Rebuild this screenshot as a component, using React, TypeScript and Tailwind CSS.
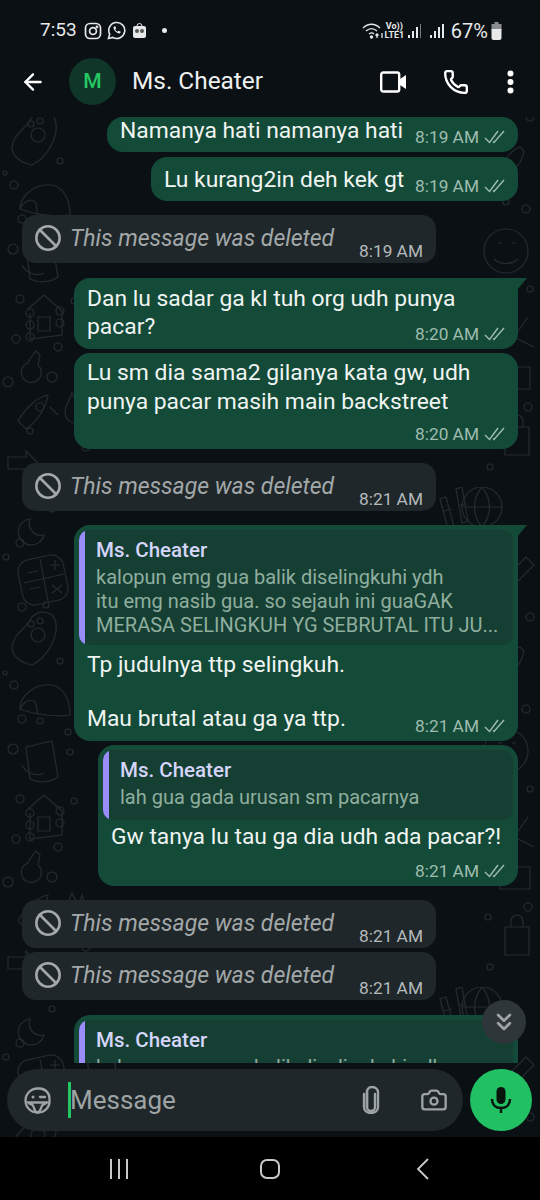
import React from "react";
import { ArrowLeft, Ban, Camera, ChevronsDown, Phone } from "lucide-react";

const DoubleCheck = () => (
    <svg width="22" height="16" viewBox="0 0 22 16" fill="none" stroke="#9fbcae" strokeWidth="1.4" className="shrink-0">
        <path d="M1 9l4.500 4.500L14 2" />
        <path d="M9 12.500l1 1L20 2" />
    </svg>
);

const Time = ({ value, read = true }: { value: string; read?: boolean }) => (
    <span className={`flex items-center gap-[5px] text-[17.3px] leading-none whitespace-nowrap ${read ? "text-[#9fbcae]" : "text-[#b4b9ba]"}`}>
        {value}
        {read && <DoubleCheck />}
    </span>
);

const Deleted = ({ time }: { time: string }) => (
    <div className="ml-[22px] mt-[14px] w-[414px] h-[48px] shrink-0 rounded-[14px] bg-[#1f272a] flex items-start pl-[12px] pr-[13px] pt-[9px]">
        <Ban size={28} strokeWidth={2.200} className="text-[#a3a8a9] shrink-0" />
        <span className="ml-[8px] text-[23px] leading-[30px] italic text-[#a3a8a9]">This message was deleted</span>
        <span className="ml-auto mt-[18.5px]"><Time value={time} read={false} /></span>
    </div>
);

const Sent = ({ left, top, height, children, time, tail = false }: { left: string; top: string; height: string; children: React.ReactNode; time: string; tail?: boolean }) => (
    <div className={`relative self-end mr-[22px] shrink-0 rounded-[16px] bg-[#134b38] ${left} ${top} ${height} ${tail ? "rounded-tr-none" : ""}`}>
        {tail && (
            <svg width="10" height="12" viewBox="0 0 10 12" className="absolute -right-[9px] top-0">
                <path d="M0 0h10L0 12z" fill="#134b38" />
            </svg>
        )}
        {children}
        <span className="absolute right-[12px] bottom-[6px]"><Time value={time} /></span>
    </div>
);

const Quote = ({ lines, height }: { lines: string[]; height: string }) => (
    <div className={`mx-[5px] mt-[5px] rounded-[10px] bg-[#163f33] flex overflow-hidden ${height}`}>
        <div className="w-[6px] bg-[#9b8cfb] shrink-0" />
        <div className="pl-[11px] pt-[6px] min-w-0">
            <div className="text-[20.5px] leading-[29px] font-medium text-[#d5d5fb]">Ms. Cheater</div>
            {lines.map((l) => (
                <div key={l} className="text-[20px] leading-[24px] text-[#8fae9f] whitespace-nowrap">{l}</div>
            ))}
        </div>
    </div>
);

// background doodles, tile repeats down the chat
const Wallpaper = () => (
    <svg className="absolute inset-0 w-full h-full" fill="none" stroke="#232a2e" strokeWidth="1.200">
        <defs>
            <pattern id="doodle" width="540" height="500" patternUnits="userSpaceOnUse" y="370">
                {/* moon */}
                <path d="M30 32a13 13 0 1 0 14 16 12 12 0 0 1-14-16z" />
                {/* calculator */}
                <rect x="20" y="70" width="46" height="46" rx="12" transform="rotate(-12 43 93)" />
                <path d="M24 96l40-9M40 72l8 42M50 78h10M55 73v10M52 98l10 8M62 98l-10 8M28 86l10-2M30 102l10-2" />
                {/* paw */}
                <path d="M12 160c2-14 14-18 20-30 8-8 22-6 24 6 2 14-8 34-24 42-10-2-20-8-20-18z" />
                <circle cx="38" cy="148" r="7" /><circle cx="31" cy="137" r="3" /><circle cx="40" cy="134" r="3" />
                {/* taco */}
                <path d="M20 222c0-14 16-26 32-24 10 2 18 12 18 30-12 2-34 0-50-6z" />
                <path d="M20 222c4-8 10-10 14-8s2 10 4 14" />
                {/* cup */}
                <path d="M26 260l26-6 6 36c-8 6-20 6-28 2z" />
                <path d="M22 278c4 8 14 12 22 8" />
                {/* cabin */}
                <path d="M28 322l16-14 18 16M30 326v26l32-4v-24M38 330h12v14H38z" />
                <circle cx="30" cy="326" r="4" /><circle cx="30" cy="338" r="4" /><circle cx="30" cy="350" r="4" /><circle cx="60" cy="324" r="4" /><circle cx="60" cy="336" r="4" />
                {/* flask */}
                <path d="M30 372l6-8 4 4-2 10a10 10 0 1 1-10-2z" />
                {/* rocket */}
                <path d="M18 424c8-14 20-24 30-26-2 12-10 26-22 34zM50 410l8 8" transform="translate(0 10)" />
                <circle cx="40" cy="420" r="4" />
                {/* hand */}
                <path d="M66 420l6-14 6 12 4-10 4 14c2 10-4 16-12 14s-10-8-8-16z" />
                {/* heart and arrow */}
                <path d="M90 84c-8-10 8-18 12-8 6-8 20 0 10 12l-12 12zM8 470h18v-6l12 12-12 12v-6H8z" />
                {/* globe */}
                <circle cx="482" cy="20" r="20" />
                <path d="M462 20h40M482 0c-10 12-10 28 0 40M482 0c10 12 10 28 0 40" />
                {/* bamboo */}
                <path d="M440 12l8 30 6-2-8-30zM456 2l6 34 6-2-6-34zM444 24l8-2M460 18l6-1" />
                {/* pencil box */}
                <path d="M526 70l-30 30 8 8 30-30zM496 100l-4 12 12-4" />
                {/* smiley */}
                <circle cx="506" cy="264" r="22" />
                <path d="M494 272c6 6 18 6 24 0M498 256h4M512 256h4" />
                {/* leaf */}
                <path d="M520 160c-10 4-18 14-18 26 12 0 20-10 22-22zM528 330l-14 20 20 10M500 380l30 0 0 22-30 0z" />
                {/* bag */}
                <path d="M505 440h24v28h-24zM511 440v-6a6 6 0 0 1 12 0v6" />
                {/* small dots */}
                <circle cx="52" cy="22" r="3" /><circle cx="6" cy="70" r="3" /><circle cx="20" cy="56" r="4" /><circle cx="46" cy="118" r="3" />
                <circle cx="22" cy="120" r="4" /><circle cx="60" cy="174" r="3" /><circle cx="14" cy="198" r="4" /><circle cx="5" cy="186" r="2" />
                <circle cx="22" cy="232" r="4" /><circle cx="40" cy="234" r="3" /><circle cx="13" cy="262" r="5" /><circle cx="68" cy="245" r="3" />
                <circle cx="70" cy="265" r="3" /><circle cx="20" cy="312" r="4" /><circle cx="74" cy="314" r="3" /><circle cx="16" cy="352" r="4" />
                <circle cx="58" cy="360" r="4" /><circle cx="52" cy="390" r="5" /><circle cx="8" cy="395" r="5" /><circle cx="500" cy="130" r="3" />
                <circle cx="530" cy="130" r="4" /><circle cx="506" cy="215" r="3" /><circle cx="526" cy="222" r="4" /><circle cx="530" cy="302" r="3" />
                <circle cx="510" cy="312" r="4" /><circle cx="528" cy="420" r="4" /><circle cx="488" cy="430" r="3" /><circle cx="490" cy="480" r="3" />
                <circle cx="30" cy="444" r="3" /><circle cx="86" cy="460" r="4" /><circle cx="60" cy="488" r="3" />
            </pattern>
        </defs>
        <rect width="100%" height="100%" fill="url(#doodle)" stroke="none" />
    </svg>
);

const bodyText = "text-[22.85px] text-[#f0f4f2]";

export default function App() {
    return (
        <div className="w-[540px] h-[1200px] flex flex-col overflow-hidden bg-[#0b1014] text-white" style={{ fontFamily: "Roboto, sans-serif" }}>
            {/* status bar */}
            <div className="h-[60px] shrink-0 flex items-center pl-[40px] pr-[38px] pt-[1px] text-[#e6e8e9]">
                <span className="text-[19px]">7:53</span>
                <svg width="18" height="18" viewBox="0 0 18 18" fill="none" stroke="#e6e8e9" strokeWidth="1.700" className="ml-[7px]">
                    <rect x="1.500" y="1.500" width="15" height="15" rx="4.500" />
                    <circle cx="9" cy="9" r="3.400" />
                    <circle cx="13" cy="5" r=".6" />
                </svg>
                <svg width="19" height="19" viewBox="0 0 19 19" fill="none" stroke="#e6e8e9" strokeWidth="1.600" className="ml-[5px]">
                    <path d="M1.500 17.500l1.200-4.300A8 8 0 1 1 5.800 16.400z" />
                    <path d="M6.500 6c0 3.500 3 6.500 6.500 6.500l.8-1.800-2.300-1-.9 1c-1-.4-2-1.400-2.400-2.400l1-.9-1-2.300z" fill="#e6e8e9" stroke="none" />
                </svg>
                <svg width="15" height="17" viewBox="0 0 15 17" className="ml-[6px]">
                    <path d="M5 4a2.500 2.500 0 0 1 5 0" fill="none" stroke="#e6e8e9" strokeWidth="1" />
                    <rect x="1" y="4" width="13" height="12" rx="2" fill="#e6e8e9" />
                    <circle cx="5" cy="9" r="2" fill="#555" /><circle cx="10" cy="9" r="2" fill="#555" />
                </svg>
                <span className="ml-[15px] w-[5px] h-[5px] rounded-full bg-[#e6e8e9]" />
                <span className="flex-1" />
                <svg width="23" height="17" viewBox="0 0 23 17" fill="none" stroke="#e6e8e9" strokeWidth="1.300">
                    <path d="M1 6c5-5 12-5 17 0M4 9c3.500-3 7.500-3 11 0M7 12c2-1.500 3.500-1.500 5 0" />
                    <circle cx="9.500" cy="15" r="1" fill="#e6e8e9" />
                    <path d="M15 16v-4M13.500 13.500L15 12l1.500 1.500M20 11v5" />
                </svg>
                <div className="flex flex-col items-center text-[9px] leading-[9px] font-bold w-[19px]">
                    <span>Vo))</span>
                    <span>LTE1</span>
                </div>
                <svg width="14" height="16" viewBox="0 0 14 16" fill="#e6e8e9" className="ml-[4px]">
                    <rect x="0" y="12" width="2" height="3" /><rect x="4" y="8" width="2" height="7" /><rect x="8" y="4" width="2" height="11" /><rect x="12" y="1" width="1" height="14" fill="#777" />
                </svg>
                <svg width="14" height="16" viewBox="0 0 14 16" fill="#e6e8e9" className="ml-[8px]">
                    <rect x="0" y="12" width="2" height="3" /><rect x="4" y="8" width="2" height="7" /><rect x="8" y="4" width="2" height="11" /><rect x="12" y="1" width="2" height="14" />
                </svg>
                <span className="ml-[7px] text-[20px]">67%</span>
                <svg width="11" height="18" viewBox="0 0 11 18" className="ml-[3px]">
                    <rect x="3.500" y="0" width="4" height="3" fill="#8a8d8f" />
                    <rect x="0.500" y="2" width="10" height="6" fill="#8a8d8f" />
                    <path d="M.5 7h10v9a2 2 0 0 1-2 2h-6a2 2 0 0 1-2-2z" fill="#e6e8e9" />
                </svg>
            </div>

            {/* header */}
            <div className="h-[57px] shrink-0 flex items-center pl-[20px] pr-[26px] pb-[14px]">
                <ArrowLeft size={26} strokeWidth={2.200} className="text-white" />
                <div className="ml-[23px] w-[47px] h-[47px] rounded-full bg-[#103529] flex items-center justify-center text-[21px] font-medium text-[#25c763]">M</div>
                <span className="ml-[16px] text-[24.4px] text-[#eef0f0]">Ms. Cheater</span>
                <span className="flex-1" />
                <svg width="27" height="22" viewBox="0 0 27 22" fill="none" stroke="#fff" strokeWidth="2.400">
                    <rect x="1.200" y="1.500" width="18" height="19" rx="2" />
                    <path d="M20 8l6-4v14l-6-4z" fill="#fff" strokeWidth="0" />
                </svg>
                <Phone size={26} strokeWidth={2.200} className="ml-[36px] text-white" />
                <svg width="7" height="24" viewBox="0 0 7 24" fill="#fff" className="ml-[38px]">
                    <circle cx="3.500" cy="3.500" r="3" /><circle cx="3.500" cy="12" r="3" /><circle cx="3.500" cy="20.500" r="3" />
                </svg>
            </div>

            {/* chat */}
            <div className="relative flex-1 min-h-0 overflow-hidden">
                <Wallpaper />
                <div className="absolute inset-0 flex flex-col">
                    <div className="h-[946px] overflow-hidden flex flex-col shrink-0">
                        <Sent left="w-[411px]" top="mt-0" height="h-[35px]" time="8:19 AM">
                            <div className={`pl-[13px] leading-[27px] ${bodyText}`}>Namanya hati namanya hati</div>
                        </Sent>
                        <Sent left="w-[367px]" top="mt-[5px]" height="h-[44px]" time="8:19 AM">
                            <div className={`pl-[13px] pt-[8px] leading-[30px] ${bodyText}`}>Lu kurang2in deh kek gt</div>
                        </Sent>
                        <Deleted time="8:19 AM" />
                        <Sent left="w-[444px]" top="mt-[15px]" height="h-[71px]" time="8:20 AM" tail>
                            <div className={`pl-[13px] pt-[7px] leading-[28px] ${bodyText}`}>Dan lu sadar ga kl tuh org udh punya<br />pacar?</div>
                        </Sent>
                        <Sent left="w-[444px]" top="mt-[4px]" height="h-[96px]" time="8:20 AM">
                            <div className={`pl-[13px] pt-[6px] leading-[28.5px] ${bodyText}`}>Lu sm dia sama2 gilanya kata gw, udh<br />punya pacar masih main backstreet</div>
                        </Sent>
                        <Deleted time="8:21 AM" />
                        <Sent left="w-[444px]" top="mt-[14px]" height="h-[216px]" time="8:21 AM" tail>
                            <Quote height="h-[115px]" lines={["kalopun emg gua balik diselingkuhi ydh", "itu emg nasib gua. so sejauh ini guaGAK", "MERASA SELINGKUH YG SEBRUTAL ITU JU..."]} />
                            <div className={`pl-[13px] pt-[6px] leading-[27px] ${bodyText}`}>Tp judulnya ttp selingkuh.<br /><br />Mau brutal atau ga ya ttp.</div>
                        </Sent>
                        <Sent left="w-[420px]" top="mt-[4px]" height="h-[141px]" time="8:21 AM">
                            <Quote height="h-[70px]" lines={["lah gua gada urusan sm pacarnya"]} />
                            <div className={`pl-[13px] pt-[2px] leading-[30px] ${bodyText}`}>Gw tanya lu tau ga dia udh ada pacar?!</div>
                        </Sent>
                        <Deleted time="8:21 AM" />
                        <div className="-mt-[10px]"><Deleted time="8:21 AM" /></div>
                        <div className="relative self-end mr-[22px] mt-[15px] w-[444px] h-[48px] shrink-0 rounded-t-[16px] bg-[#134b38] overflow-hidden">
                            <Quote height="h-[90px]" lines={["kalopun emg gua balik diselingkuhi ydh"]} />
                        </div>
                    </div>
                    <div className="mt-[6px] flex items-center pl-[7px] pr-[8px] shrink-0">
                        <div className="flex-1 h-[62px] rounded-full bg-[#1f272a] flex items-center pl-[17px] pr-[15px] text-[#9ea3a4]">
                            <svg width="27" height="27" viewBox="0 0 27 27" fill="none" stroke="#9ea3a4" strokeWidth="2.300">
                                <path d="M13.500 1.500h2a10 10 0 0 1 10 10v3a11 11 0 0 1-11 11h-1a12 12 0 0 1-12-12 12 12 0 0 1 12-12z" />
                                <path d="M4 15.500h19c-2 2-4 2-5 3-1 3-2 7-5 7-3-1-3-6-4-7-1-1-3-1-5-3z" />
                                <circle cx="9" cy="10" r="1.500" fill="#9ea3a4" stroke="none" />
                                <path d="M16 10h5" strokeLinecap="round" />
                            </svg>
                            <span className="ml-[17px] w-[3px] h-[36px] bg-[#25c763] shrink-0" />
                            <span className="text-[26px] leading-none -ml-px">Message</span>
                            <span className="flex-1" />
                            <svg width="20" height="28" viewBox="0 0 20 28" fill="none" stroke="#9ea3a4" strokeWidth="2.400" strokeLinecap="round">
                                <path d="M14 8v13a4 4 0 0 1-8 0V6" />
                                <path d="M6 21V6a5 5 0 0 1 5-5c3 0 6 2 6 5v15c0 3.500-3 6-7 6s-7-2.500-7-6V8" />
                            </svg>
                            <Camera size={28} strokeWidth={2} className="ml-[39px]" />
                        </div>
                        <div className="ml-[7px] w-[62px] h-[62px] rounded-full bg-[#21c063] flex items-center justify-center">
                            <svg width="24" height="28" viewBox="0 0 24 28" fill="none" stroke="#07150e" strokeWidth="2.400">
                                <rect x="7.500" y="1" width="9" height="17" rx="4.500" fill="#07150e" stroke="none" />
                                <path d="M3 13c0 6 4 9 9 9s9-3 9-9M12 22v5" />
                            </svg>
                        </div>
                    </div>
                    <div className="absolute right-[14px] top-[883px] w-[44px] h-[44px] rounded-full bg-[#2e363a] flex items-center justify-center">
                        <ChevronsDown size={28} strokeWidth={2.400} className="text-[#9ea3a4]" />
                    </div>
                </div>
            </div>

            {/* nav bar */}
            <div className="h-[63px] shrink-0 bg-black flex items-center pl-[109px]">
                <svg width="20" height="20" viewBox="0 0 20 20" stroke="#c9c9c9" strokeWidth="2"><path d="M2 0v20M10 0v20M18 0v20" /></svg>
                <span className="ml-[131px] w-[20px] h-[20px] rounded-[7px] border-2 border-[#c9c9c9]" />
                <svg width="13" height="22" viewBox="0 0 13 22" fill="none" stroke="#c9c9c9" strokeWidth="1.800" className="ml-[136px]">
                    <path d="M12 1L2 11l10 10" />
                </svg>
            </div>
        </div>
    );
}
